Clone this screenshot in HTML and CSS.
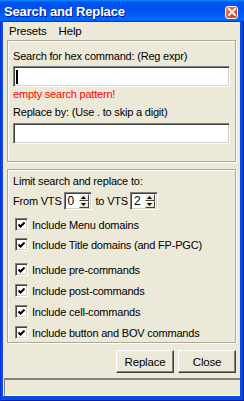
FILE: index.html
```html
<!DOCTYPE html>
<html>
<head>
<meta charset="utf-8">
<link rel="stylesheet" href="styles.css">
</head>
<body>
<div class="window">
  <div class="titlebar">
    <span class="title">Search and Replace</span>
    <span class="close"><svg width="8" height="8" viewBox="0 0 8 8"><path d="M1 1 L7 7 M7 1 L1 7" stroke="#fff" stroke-width="1.8" stroke-linecap="square"/></svg></span>
  </div>
  <div class="frame">
    <div class="client">
      <div class="menubar"><span class="menu">Presets</span><span class="menu">Help</span></div>
      <div class="panel p1">
        <div class="label">Search for hex command: (Reg expr)</div>
        <div class="field f1"><span class="caret"></span></div>
        <div class="error">empty search pattern!</div>
        <div class="label l2">Replace by: (Use . to skip a digit)</div>
        <div class="field f2"></div>
      </div>
      <div class="panel p2">
        <div class="label">Limit search and replace to:</div>
        <div class="vts">
          <span class="vtxt">From VTS</span>
          <span class="spin"><span class="val">0</span><span class="arrows"><span class="arr up"><svg width="5" height="3" viewBox="0 0 5 3"><path d="M0 3 L2.5 0 L5 3Z" fill="#000"/></svg></span><span class="arr down"><svg width="5" height="3" viewBox="0 0 5 3"><path d="M0 0 L2.5 3 L5 0Z" fill="#000"/></svg></span></span></span>
          <span class="vtxt t2">to VTS</span>
          <span class="spin"><span class="val">2</span><span class="arrows"><span class="arr up"><svg width="5" height="3" viewBox="0 0 5 3"><path d="M0 3 L2.5 0 L5 3Z" fill="#000"/></svg></span><span class="arr down"><svg width="5" height="3" viewBox="0 0 5 3"><path d="M0 0 L2.5 3 L5 0Z" fill="#000"/></svg></span></span></span>
        </div>
        <div class="check c1"><span class="box"><svg width="7" height="7" viewBox="0 0 7 7"><path d="M0.5 2.5 L2.5 4.5 L6.5 0.5" stroke="#000" stroke-width="2" fill="none"/></svg></span>Include Menu domains</div>
        <div class="check c2"><span class="box"><svg width="7" height="7" viewBox="0 0 7 7"><path d="M0.5 2.5 L2.5 4.5 L6.5 0.5" stroke="#000" stroke-width="2" fill="none"/></svg></span>Include Title domains (and FP-PGC)</div>
        <div class="check c3"><span class="box"><svg width="7" height="7" viewBox="0 0 7 7"><path d="M0.5 2.5 L2.5 4.5 L6.5 0.5" stroke="#000" stroke-width="2" fill="none"/></svg></span>Include pre-commands</div>
        <div class="check"><span class="box"><svg width="7" height="7" viewBox="0 0 7 7"><path d="M0.5 2.5 L2.5 4.5 L6.5 0.5" stroke="#000" stroke-width="2" fill="none"/></svg></span>Include post-commands</div>
        <div class="check"><span class="box"><svg width="7" height="7" viewBox="0 0 7 7"><path d="M0.5 2.5 L2.5 4.5 L6.5 0.5" stroke="#000" stroke-width="2" fill="none"/></svg></span>Include cell-commands</div>
        <div class="check"><span class="box"><svg width="7" height="7" viewBox="0 0 7 7"><path d="M0.5 2.5 L2.5 4.5 L6.5 0.5" stroke="#000" stroke-width="2" fill="none"/></svg></span>Include button and BOV commands</div>
      </div>
      <div class="buttons"><span class="btn">Replace</span><span class="btn">Close</span></div>
      <div class="status"></div>
    </div>
  </div>
</div>
</body>
</html>
```
FILE: styles.css
```css
* { box-sizing: border-box; }
html, body { margin: 0; padding: 0; }
body {
  width: 244px;
  height: 401px;
  overflow: hidden;
  font-family: "Liberation Sans", Arial, sans-serif;
  font-size: 11px;
  letter-spacing: -0.2px;
  color: #000;
}
.window {
  width: 244px;
  height: 401px;
  display: flex;
  flex-direction: column;
}
.titlebar {
  height: 22px;
  flex: none;
  display: flex;
  align-items: center;
  justify-content: space-between;
  padding: 0 6px 0 4px;
  background: linear-gradient(to bottom, #0997ff 0%, #0053ee 9%, #0050ee 40%, #0066ff 85%, #0066ff 92%, #005bff 95%, #003dd7 97%, #003dd7 100%);
}
.title {
  color: #fff;
  font-weight: bold;
  font-size: 13px;
  letter-spacing: -0.15px;
  text-shadow: 1px 1px #0a1883;
  margin-top: 1px;
}
.close {
  width: 13px;
  height: 13px;
  margin-top: 2px;
  border: 1px solid #fff;
  border-radius: 3px;
  background: radial-gradient(circle at 80% 80%, #cc4625 0%, #e35834 50%, #f08f74 100%);
  display: flex;
  align-items: center;
  justify-content: center;
}
.frame {
  flex: 1;
  display: flex;
  padding: 0 4px 5px 3px;
  background: #0a4ce3;
  box-shadow: inset 1px 0 #0831d9, inset -1px 0 #001ea0, inset 0 -1px #001ea0;
}
.client {
  flex: 1;
  background: #ece9d8;
  display: flex;
  flex-direction: column;
}
.menubar {
  height: 18px;
  flex: none;
  display: flex;
  align-items: center;
  padding-left: 6px;
  gap: 12px;
  font-size: 11.5px;
}
.panel {
  margin: 0 4px;
  border: 1px solid #aca899;
  box-shadow: inset 1px 1px #fff, 1px 1px #fff;
  padding: 1px 5px 1px 5px;
  display: flex;
  flex-direction: column;
}
.p1 { height: 122px; padding-top: 9px; }
.p2 { height: 174px; margin-top: 7px; padding-top: 5px; }
.label, .error { line-height: 13px; height: 13px; white-space: nowrap; }
.error { color: #ff0000; margin-top: 1px; }
.l2 { margin-top: 5px; }
.field {
  height: 21px;
  background: #fff;
  border: 1px solid;
  border-color: #808080 #fff #fff #808080;
  box-shadow: inset 1px 1px #404040, inset -1px -1px #d4d0c8;
  display: flex;
  align-items: center;
  padding-left: 2px;
}
.f1 { margin-top: 3px; }
.f2 { margin-top: 4px; }
.caret { width: 2px; height: 14px; background: #000; }
.vts {
  height: 18px;
  margin-top: 4px;
  display: flex;
  align-items: center;
}
.vtxt { white-space: nowrap; }
.t2 { margin-left: 4px; }
.spin {
  width: 28px;
  height: 18px;
  margin-left: 2px;
  background: #fff;
  border: 1px solid;
  border-color: #808080 #fff #fff #808080;
  box-shadow: inset 1px 1px #404040, inset -1px -1px #d4d0c8;
  display: flex;
  align-items: center;
  justify-content: space-between;
  padding: 2px 2px 2px 3px;
  font-size: 12px;
}
.val { line-height: 13px; }
.arrows {
  width: 10px;
  height: 14px;
  display: flex;
  flex-direction: column;
}
.arr {
  flex: 1;
  background: #ece9d8;
  border: 1px solid;
  border-color: #fff #404040 #404040 #fff;
  display: flex;
  align-items: center;
  justify-content: center;
}
.check {
  height: 13px;
  display: flex;
  align-items: center;
  margin-top: 8px;
  padding-left: 2px;
  white-space: nowrap;
}
.c1 { margin-top: 8px; }
.c2 { margin-top: 7px; }
.c3 { margin-top: 12px; }
.box {
  width: 13px;
  height: 13px;
  flex: none;
  margin-right: 4px;
  background: #fff;
  border: 1px solid;
  border-color: #808080 #fff #fff #808080;
  box-shadow: inset 1px 1px #404040, inset -1px -1px #d4d0c8;
  display: flex;
  align-items: center;
  justify-content: center;
  padding-top: 1px;
}
.buttons {
  height: 23px;
  margin-top: 7px;
  display: flex;
  justify-content: flex-end;
  gap: 4px;
  padding-right: 4px;
}
.btn {
  width: 58px;
  height: 23px;
  background: #ece9d8;
  border: 1px solid;
  border-color: #fff #404040 #404040 #fff;
  box-shadow: inset -1px -1px #808080;
  display: flex;
  align-items: center;
  justify-content: center;
  font-size: 11.5px;
}
.status {
  height: 18px;
  margin: 5px 0 0 1px;
  border-top: 2px solid #808080;
  border-left: 1px solid #808080;
  border-bottom: 1px solid #fff;
  box-shadow: inset 0 1px #ece9d8;
}
```
